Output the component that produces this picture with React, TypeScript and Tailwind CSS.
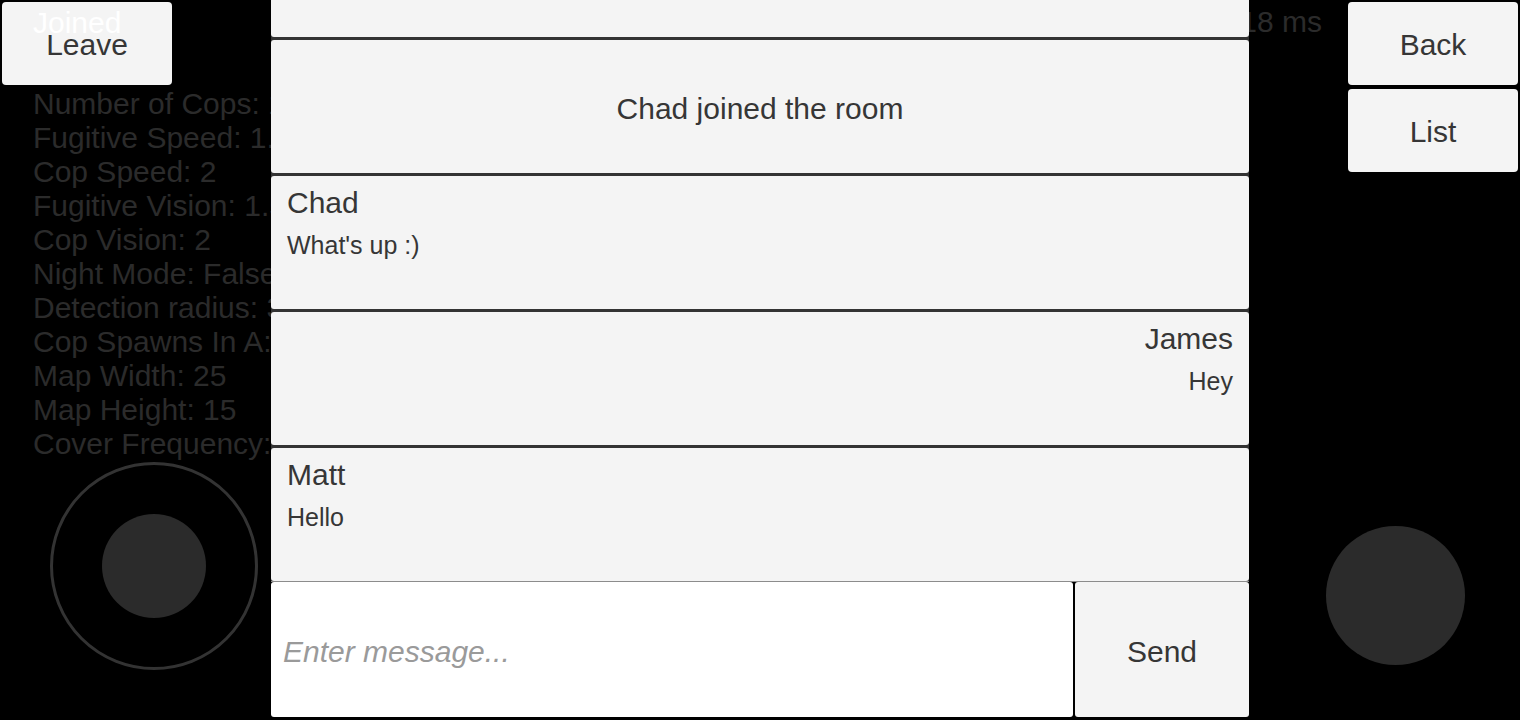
import React from 'react';

const SETTINGS = [
  'Number of Cops: 1',
  'Fugitive Speed: 1.5',
  'Cop Speed: 2',
  'Fugitive Vision: 1.5',
  'Cop Vision: 2',
  'Night Mode: False',
  'Detection radius: 3',
  'Cop Spawns In A: 5',
  'Map Width: 25',
  'Map Height: 15',
  'Cover Frequency: 5',
];

const MESSAGES = [
  { name: 'Chad', text: "What's up :)", align: 'left' },
  { name: 'James', text: 'Hey', align: 'right' },
  { name: 'Matt', text: 'Hello', align: 'left' },
] as const;

function GameButton({ label, className = '' }: { label: string; className?: string }) {
  return (
    <button
      type="button"
      className={`flex h-[83px] w-[170px] items-center justify-center rounded-[4px] bg-[#f4f4f4] pt-[2px] text-[30px] text-[#363636] ${className}`}
    >
      {label}
    </button>
  );
}

export default function App() {
  return (
    <div
      className="flex h-[720px] w-[1520px] overflow-hidden bg-black"
      style={{ fontFamily: '"Liberation Sans", Arial, sans-serif' }}
    >
      {/* Left column: leave, room settings, move joystick */}
      <div className="relative flex w-[271px] shrink-0 flex-col overflow-hidden">
        <div className="relative ml-[2px] mt-[2px]">
          <GameButton label="Leave" />
          <span className="absolute left-[31px] top-[4px] text-[30px] leading-[34px] text-white">Joined</span>
        </div>
        <div className="ml-[33px] mt-[2px] flex flex-col whitespace-nowrap text-[30px] leading-[34px] text-[#2b2b2b]">
          {SETTINGS.map((s) => (
            <span key={s}>{s}</span>
          ))}
        </div>
        <div className="ml-[50px] mt-px flex h-[208px] w-[208px] items-center justify-center rounded-full border-[3px] border-[#333]">
          <div className="h-[104px] w-[104px] rounded-full bg-[#2b2b2b]" />
        </div>
      </div>

      {/* Chat panel */}
      <div className="flex w-[978px] shrink-0 flex-col">
        <div className="flex flex-col gap-[3px] bg-[#333]">
          <div className="h-[37px] rounded-b-[3px] bg-[#f4f4f4]" />
          <div className="flex h-[133px] items-center justify-center rounded-[3px] bg-[#f4f4f4] pt-[3px] text-[30px] text-[#363636]">
            Chad joined the room
          </div>
          {MESSAGES.map((m) => (
            <div
              key={m.name}
              className={`flex h-[133px] flex-col rounded-[3px] bg-[#f4f4f4] px-[16px] pt-[10px] text-[#363636] ${
                m.align === 'right' ? 'items-end' : 'items-start'
              }`}
            >
              <span className="text-[30px] leading-[34px]">{m.name}</span>
              <span className="mt-[10px] text-[25px] leading-[30px]">{m.text}</span>
            </div>
          ))}
        </div>
        <div className="h-px bg-[#8c8c8c]" />
        <div className="flex h-[135px] gap-[2px]">
          <div className="flex flex-1 items-center rounded-[3px] bg-white pl-[12px] pt-[4px]">
            <span className="text-[30px] italic text-[#9a9a9a]">Enter message...</span>
          </div>
          <button
            type="button"
            className="flex w-[174px] items-center justify-center rounded-[3px] bg-[#f4f4f4] pt-[4px] text-[30px] text-[#363636]"
          >
            Send
          </button>
        </div>
      </div>

      {/* Right column: ping, back/list, action button */}
      <div className="flex flex-1 flex-col overflow-hidden">
        <div className="flex justify-end gap-[26px] pr-[2px] pt-[2px]">
          <span className="mt-[3px] whitespace-nowrap text-[30px] leading-[34px] text-[#2b2b2b]">18 ms</span>
          <div className="flex flex-col gap-[4px]">
            <GameButton label="Back" />
            <GameButton label="List" />
          </div>
        </div>
        <div className="ml-[77px] mt-[354px] h-[139px] w-[139px] rounded-full bg-[#2b2b2b]" />
      </div>
    </div>
  );
}
